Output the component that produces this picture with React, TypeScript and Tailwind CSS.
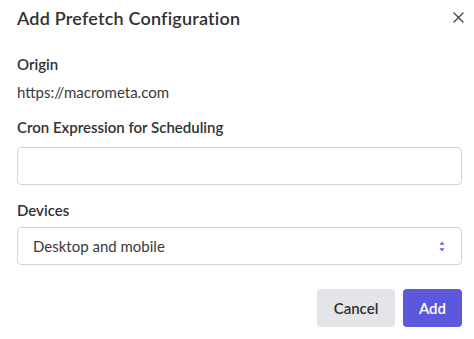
import React from "react";

export default function App() {
  return (
    <div className="w-[474px] h-[339px] bg-white pl-[17px] pr-[12px] pt-[5px] font-['Lato',sans-serif] text-[#303133] overflow-hidden">
      <div className="flex items-center justify-between h-[26px]">
        <h1 className="text-[18px] font-semibold leading-[26px] tracking-[0.2px]">Add Prefetch Configuration</h1>
        <button className="-mr-[2px] mb-[1px] w-[12px] h-[12px] flex items-center justify-center text-[#444]" aria-label="Close">
          <svg width="11" height="11" viewBox="0 0 11 11" fill="none" stroke="currentColor" strokeWidth="1.4" strokeLinecap="round">
            <path d="M1 1L10 10M10 1L1 10" />
          </svg>
        </button>
      </div>

      <div className="mt-[23px] text-[15px] font-semibold leading-[20px]">Origin</div>
      <div className="mt-[8px] text-[15px] leading-[20px] text-[#3a3a3a]">https://macrometa.com</div>

      <div className="mt-[15px] text-[15px] font-semibold leading-[20px]">Cron Expression for Scheduling</div>
      <input
        type="text"
        className="mt-[10px] block w-full h-[38px] rounded-[4px] border border-[#d4d4d8] bg-white px-[15px] text-[15px] outline-none"
      />

      <div className="mt-[15px] text-[15px] font-semibold leading-[20px]">Devices</div>
      <div className="mt-[7px] flex items-center justify-between h-[38px] rounded-[4px] border border-[#d4d4d8] bg-white pl-[15px] pr-[16px]">
        <span className="text-[15px] text-[#3a3a3a]">Desktop and mobile</span>
        <svg width="6" height="11" viewBox="0 0 6 11" fill="#6b63d9">
          <path d="M3 0.5L5.6 3.8H0.4Z" />
          <path d="M3 10.5L5.6 7.2H0.4Z" />
        </svg>
      </div>

      <div className="mt-[24px] flex justify-end gap-[8px]">
        <button className="w-[78px] h-[38px] rounded-[4px] bg-[#e4e5e8] text-[15px] font-semibold text-[#303133]">Cancel</button>
        <button className="w-[59px] h-[38px] rounded-[4px] bg-[#5c58dc] text-[15px] font-semibold text-white">Add</button>
      </div>
    </div>
  );
}
